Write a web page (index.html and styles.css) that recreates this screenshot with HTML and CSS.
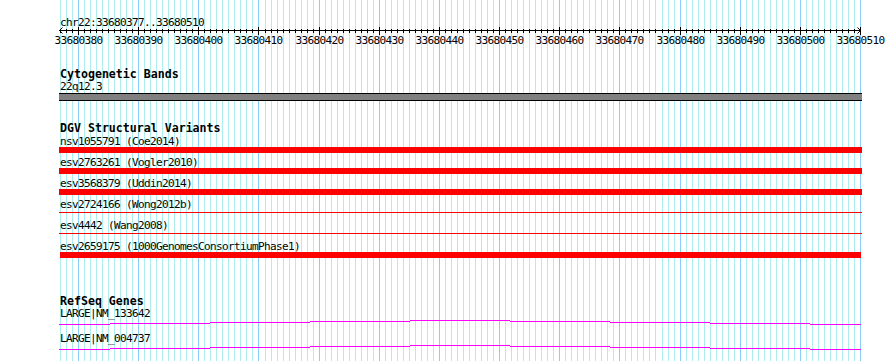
FILE: index.html
```html
<!DOCTYPE html>
<html lang="en">
<head>
    <meta charset="UTF-8">
    <meta name="viewport" content="width=device-width, initial-scale=1.0">
    <title>chr22:33680377..33680510</title>
    <link rel="stylesheet" href="styles.css">
</head>
<body>
    <div class="panel">
        <svg id="grid" class="grid" width="803" height="361"></svg>

        <div class="tracks">
            <section class="ruler">
                <div class="label">chr22:33680377..33680510</div>
                <svg id="scale" class="scale" width="803" height="20"></svg>
            </section>

            <section class="track cyto">
                <h2>Cytogenetic Bands</h2>
                <div class="label">22q12.3</div>
                <div class="band"></div>
            </section>

            <section class="track dgv">
                <h2>DGV Structural Variants</h2>
                <div id="variant-list" class="variant-list"></div>
            </section>

            <section class="track refseq">
                <h2>RefSeq Genes</h2>
                <div id="gene-list" class="gene-list"></div>
            </section>
        </div>
    </div>

    <script>
        const region = { chrom: "chr22", start: 33680377, end: 33680510 };
        const panelLeft = 59;
        const pxPerBp = 800 / (region.end - region.start);

        const variants = [
            { id: "nsv1055791", study: "Coe2014", style: "bar" },
            { id: "esv2763261", study: "Vogler2010", style: "bar" },
            { id: "esv3568379", study: "Uddin2014", style: "bar" },
            { id: "esv2724166", study: "Wong2012b", style: "thin" },
            { id: "esv4442", study: "Wang2008", style: "thin" },
            { id: "esv2659175", study: "1000GenomesConsortiumPhase1", style: "bar inset" }
        ];

        const genes = ["LARGE|NM_133642", "LARGE|NM_004737"];

        // intron connector: [from x, to x, row] in page pixels
        const intron = [
            [59, 110, 5], [110, 210, 4], [210, 310, 3], [310, 410, 2], [410, 510, 1],
            [510, 610, 2], [610, 710, 3], [710, 810, 4], [810, 861, 5]
        ];

        function bpToX(bp) {
            return Math.round(60 + (bp - region.start) * pxPerBp) - panelLeft;
        }

        function renderGrid() {
            let lines = "";
            for (let bp = region.start; bp <= region.end + 1; bp++) {
                const x = bpToX(bp) + 0.5;
                const cls = bp % 10 === 0 ? "major" : "minor";
                lines += `<line class="${cls}" x1="${x}" y1="0" x2="${x}" y2="361"/>`;
            }
            document.getElementById("grid").innerHTML = lines;
        }

        function renderScale() {
            let out = `<line class="axis" x1="0" y1="3.5" x2="802" y2="3.5"/>`;
            out += `<polyline class="arrow" points="3.5,0.5 0.5,3.5 3.5,6.5"/>`;
            out += `<polyline class="arrow" points="798.5,0.5 801.5,3.5 798.5,6.5"/>`;
            for (let bp = region.start; bp <= region.end; bp++) {
                const x = bpToX(bp) + 0.5;
                if (bp % 10 === 0) {
                    out += `<line class="axis" x1="${x}" y1="0" x2="${x}" y2="8"/>`;
                    out += `<text x="${x}" y="17">${bp}</text>`;
                } else {
                    out += `<line class="axis" x1="${x}" y1="2" x2="${x}" y2="6"/>`;
                }
            }
            document.getElementById("scale").innerHTML = out;
        }

        function renderVariants() {
            const list = document.getElementById("variant-list");
            list.innerHTML = "";
            for (const v of variants) {
                const item = document.createElement("div");
                item.classList.add("variant");
                item.innerHTML = `
                    <div class="label">${v.id} (${v.study})</div>
                    <div class="bar ${v.style}"></div>
                `;
                list.appendChild(item);
            }
        }

        function renderGenes() {
            const list = document.getElementById("gene-list");
            list.innerHTML = "";
            const segments = intron
                .map(([x0, x1, y]) => `<rect x="${x0 - panelLeft}" y="${y}" width="${x1 - x0}" height="1"/>`)
                .join("");
            for (const name of genes) {
                const item = document.createElement("div");
                item.classList.add("gene");
                item.innerHTML = `
                    <div class="label">${name}</div>
                    <svg class="intron" width="803" height="14">${segments}</svg>
                `;
                list.appendChild(item);
            }
        }

        renderGrid();
        renderScale();
        renderVariants();
        renderGenes();
    </script>
</body>
</html>
```

FILE: styles.css
```css
* {
    margin: 0;
    padding: 0;
    box-sizing: border-box;
}

body {
    font-family: "DejaVu Sans Mono", monospace;
    font-size: 11px;
    letter-spacing: -0.62px;
    background-color: #fff;
    color: #000;
    overflow: hidden;
}

.panel {
    display: grid;
    width: 803px;
    height: 361px;
    margin-left: 59px;
}

.grid, .tracks {
    grid-area: 1 / 1;
}

.grid {
    display: block;
    shape-rendering: crispEdges;
}

.grid .minor {
    stroke: #afeeee;
}

.grid .major {
    stroke: #87cefa;
}

.label {
    line-height: 11px;
    padding-left: 1px;
    white-space: nowrap;
}

.ruler {
    padding-top: 18px;
}

.ruler .label {
    line-height: 9px;
}

.scale {
    display: block;
    overflow: visible;
}

.scale .axis {
    stroke: #000;
    shape-rendering: crispEdges;
}

.scale .arrow {
    stroke: #000;
    fill: none;
}

.scale text {
    font-family: "DejaVu Sans Mono", monospace;
    font-size: 11px;
    letter-spacing: -0.62px;
    text-anchor: middle;
    fill: #000;
}

.track h2 {
    font-size: 11.6px;
    font-weight: bold;
    letter-spacing: 0;
    line-height: 12px;
    padding-left: 1px;
}

.cyto {
    margin-top: 21px;
}

.cyto .label {
    margin-top: 1px;
}

.band {
    height: 8px;
    margin-top: 1px;
    background-color: #808080;
    border-top: 1px solid #000;
    border-bottom: 1px solid #000;
}

.dgv {
    margin-top: 21px;
}

.variant-list {
    display: flex;
    flex-direction: column;
    gap: 4px;
    padding-top: 2px;
}

.variant .bar {
    height: 6px;
    background-color: #f00;
}

.variant .bar.thin {
    background: linear-gradient(#f00, #f00) 0 2px / 100% 1px no-repeat;
}

.variant .bar.inset {
    margin: 0 1px;
}

.refseq {
    margin-top: 37px;
}

.gene-list {
    padding-top: 1px;
}

.intron {
    display: block;
    fill: #f0f;
}
```
